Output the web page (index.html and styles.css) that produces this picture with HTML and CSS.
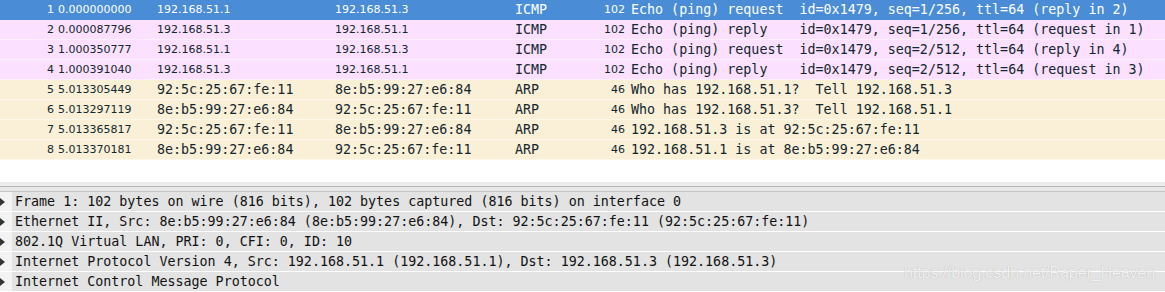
FILE: index.html
```html
<!DOCTYPE html>
<html lang="en">
<head>
    <meta charset="UTF-8">
    <title>Capture</title>
    <link rel="stylesheet" href="styles.css">
</head>
<body>
  <!-- Packet list -->
  <section class="packet-list">
    <div class="pkt selected">
      <span class="no">1</span><span class="time">0.000000000</span><span class="src">192.168.51.1</span><span class="dst">192.168.51.3</span><span class="proto">ICMP</span><span class="len">102</span><span class="info">Echo (ping) request  id=0x1479, seq=1/256, ttl=64 (reply in 2)</span>
    </div>
    <div class="pkt icmp">
      <span class="no">2</span><span class="time">0.000087796</span><span class="src">192.168.51.3</span><span class="dst">192.168.51.1</span><span class="proto">ICMP</span><span class="len">102</span><span class="info">Echo (ping) reply    id=0x1479, seq=1/256, ttl=64 (request in 1)</span>
    </div>
    <div class="pkt icmp">
      <span class="no">3</span><span class="time">1.000350777</span><span class="src">192.168.51.1</span><span class="dst">192.168.51.3</span><span class="proto">ICMP</span><span class="len">102</span><span class="info">Echo (ping) request  id=0x1479, seq=2/512, ttl=64 (reply in 4)</span>
    </div>
    <div class="pkt icmp">
      <span class="no">4</span><span class="time">1.000391040</span><span class="src">192.168.51.3</span><span class="dst">192.168.51.1</span><span class="proto">ICMP</span><span class="len">102</span><span class="info">Echo (ping) reply    id=0x1479, seq=2/512, ttl=64 (request in 3)</span>
    </div>
    <div class="pkt arp">
      <span class="no">5</span><span class="time">5.013305449</span><span class="src mac">92:5c:25:67:fe:11</span><span class="dst mac">8e:b5:99:27:e6:84</span><span class="proto">ARP</span><span class="len">46</span><span class="info">Who has 192.168.51.1?  Tell 192.168.51.3</span>
    </div>
    <div class="pkt arp">
      <span class="no">6</span><span class="time">5.013297119</span><span class="src mac">8e:b5:99:27:e6:84</span><span class="dst mac">92:5c:25:67:fe:11</span><span class="proto">ARP</span><span class="len">46</span><span class="info">Who has 192.168.51.3?  Tell 192.168.51.1</span>
    </div>
    <div class="pkt arp">
      <span class="no">7</span><span class="time">5.013365817</span><span class="src mac">92:5c:25:67:fe:11</span><span class="dst mac">8e:b5:99:27:e6:84</span><span class="proto">ARP</span><span class="len">46</span><span class="info">192.168.51.3 is at 92:5c:25:67:fe:11</span>
    </div>
    <div class="pkt arp">
      <span class="no">8</span><span class="time">5.013370181</span><span class="src mac">8e:b5:99:27:e6:84</span><span class="dst mac">92:5c:25:67:fe:11</span><span class="proto">ARP</span><span class="len">46</span><span class="info">192.168.51.1 is at 8e:b5:99:27:e6:84</span>
    </div>
  </section>

  <div class="splitter"></div>
  <div class="splitter second"></div>

  <!-- Packet details -->
  <section class="details">
    <div class="tree-row"><span class="arrow"></span><span class="label">Frame 1: 102 bytes on wire (816 bits), 102 bytes captured (816 bits) on interface 0</span></div>
    <div class="tree-row"><span class="arrow"></span><span class="label">Ethernet II, Src: 8e:b5:99:27:e6:84 (8e:b5:99:27:e6:84), Dst: 92:5c:25:67:fe:11 (92:5c:25:67:fe:11)</span></div>
    <div class="tree-row"><span class="arrow"></span><span class="label">802.1Q Virtual LAN, PRI: 0, CFI: 0, ID: 10</span></div>
    <div class="tree-row"><span class="arrow"></span><span class="label">Internet Protocol Version 4, Src: 192.168.51.1 (192.168.51.1), Dst: 192.168.51.3 (192.168.51.3)</span></div>
    <div class="tree-row"><span class="arrow"></span><span class="label">Internet Control Message Protocol</span></div>
    <div class="watermark">https://blog.csdn.net/Paper_Heaven</div>
  </section>
</body>
</html>
```

FILE: styles.css
```css
:root {
  --clr-text: #12272e;
  --clr-selected: #4a8dd6;
  --clr-icmp: #fce0ff;
  --clr-arp: #faf0d7;
  --clr-tree: #e3e3e3;
  --mono: 'DejaVu Sans Mono', monospace;
  --sans: 'DejaVu Sans', sans-serif;
}
* { margin: 0; padding: 0; box-sizing: border-box; }
body {
  width: 1165px;
  height: 292px;
  overflow: hidden;
  background: #fff;
  color: var(--clr-text);
  font-family: var(--mono);
}
.packet-list {
  height: 182px;
}
.pkt {
  display: grid;
  grid-template-columns: 58px 99px 178px 180px 80px 36px 1fr;
  height: 20px;
  align-items: center;
  white-space: pre;
  border-bottom: 1px solid rgba(255,255,255,0.45);
}
.pkt.selected { background: var(--clr-selected); color: #fff; border-bottom-color: var(--clr-selected); }
.pkt.icmp { background: var(--clr-icmp); }
.pkt.arp { background: var(--clr-arp); }
.no, .time, .src, .dst, .len {
  font-family: var(--sans);
  font-size: 11px;
}
.no { text-align: right; padding-right: 4px; }
.len { text-align: right; padding-right: 6px; }
.src.mac, .dst.mac, .proto, .info {
  font-family: var(--mono);
  font-size: 13.33px;
}
.splitter {
  height: 5px;
  background: #ececec;
  border-bottom: 1px solid #b7b7b7;
}
.splitter.second {
  background: #e8e8e8;
  border-bottom-color: #c4c4c4;
}
.splitter:first-of-type { height: 5px; }
.details {
  position: relative;
}
.tree-row {
  display: flex;
  height: 20px;
  border-bottom: 1px solid #fff;
}
.arrow {
  width: 12px;
  background: #f3f3f3;
  display: flex;
  align-items: center;
}
.arrow::before {
  content: '';
  border-left: 5px solid #333;
  border-top: 4px solid transparent;
  border-bottom: 4px solid transparent;
}
.label {
  flex: 1;
  background: var(--clr-tree);
  padding-left: 3px;
  font-size: 13.33px;
  line-height: 19px;
  color: #111;
  white-space: pre;
}
.watermark {
  position: absolute;
  right: 10px;
  bottom: 10px;
  font-family: 'Liberation Sans', Arial, sans-serif;
  font-size: 16px;
  color: rgba(255,255,255,0.85);
  text-shadow: 0 0 1px rgba(120,120,120,0.6);
  letter-spacing: -0.1px;
}
```
